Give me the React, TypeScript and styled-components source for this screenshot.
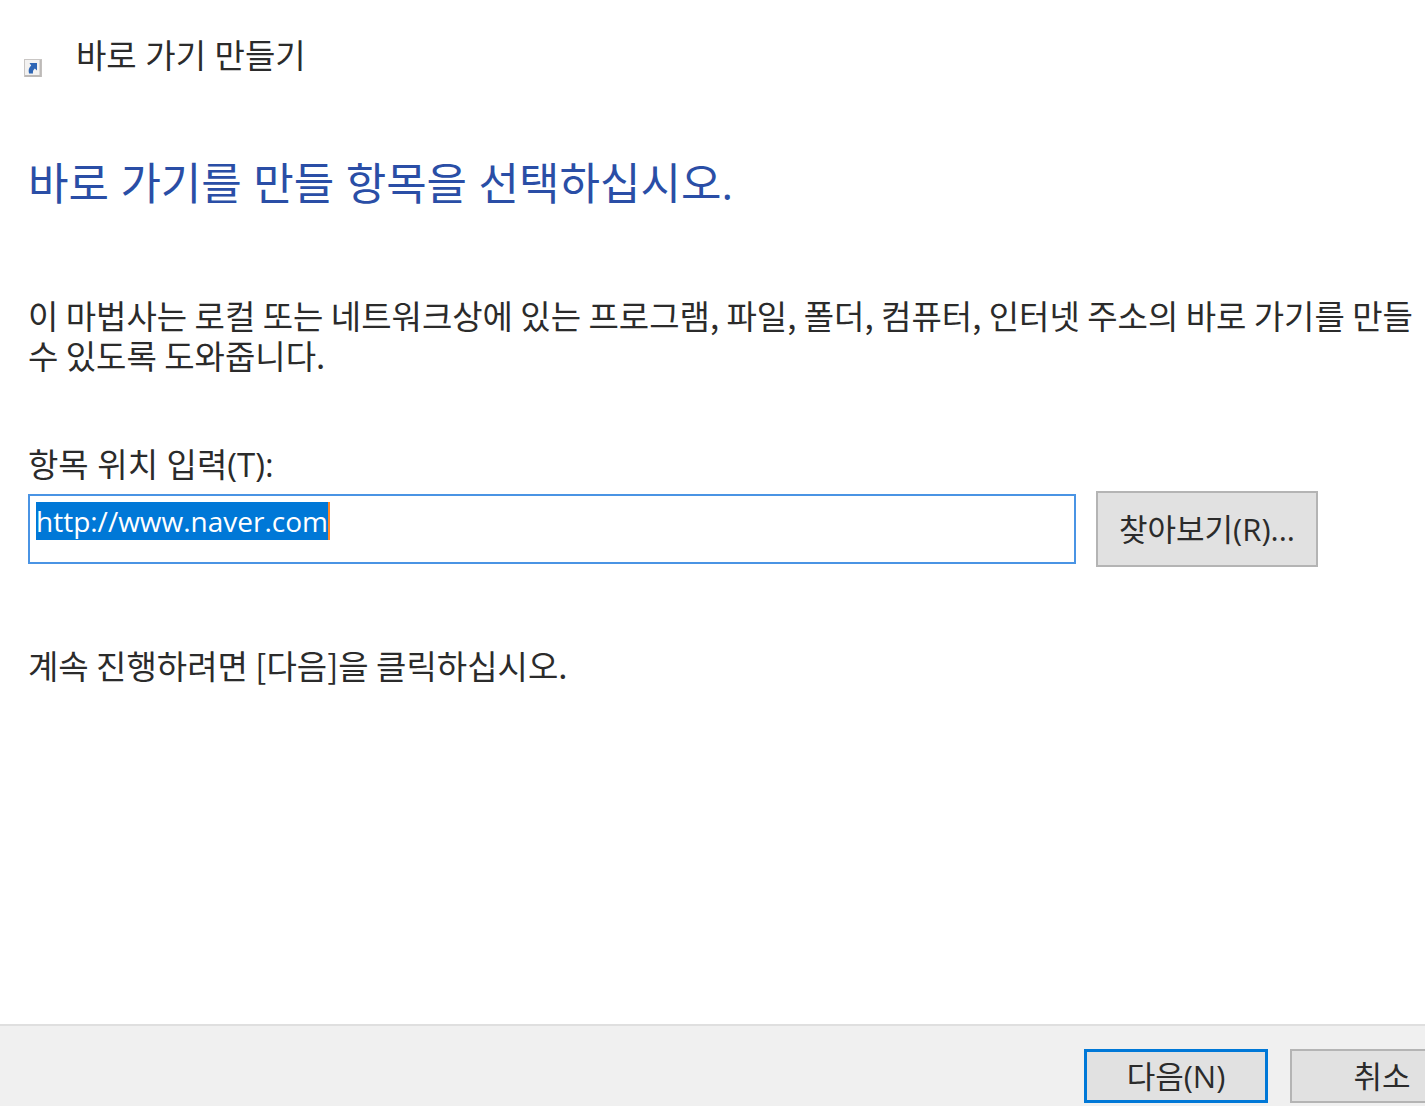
import React, { useEffect, useRef } from 'react';
import styled, { createGlobalStyle } from 'styled-components';

const Global = createGlobalStyle`
  * { box-sizing: border-box; }
  body { margin: 0; background: #fff; color: #2b2b2b; font: 33px/40px "Open Sans", "Noto Sans CJK KR", sans-serif; word-break: keep-all; }
  input, button { font: inherit; color: inherit; }
`;

const Dialog = styled.div`
  min-height: 100vh;
  display: flex;
  flex-direction: column;
  overflow: hidden;
`;

const TitleBar = styled.header`
  display: flex;
  align-items: center;
  gap: 34px;
  padding: 35px 24px 0;
`;

const ShortcutIcon = styled.svg`
  width: 18px;
  height: 18px;
  margin-top: 24px;
  flex: none;
`;

const Content = styled.main`
  flex: 1;
  padding: 78px 0 0 28px;
`;

const Heading = styled.h1`
  margin: 0 0 84px;
  font-size: 44px;
  line-height: 56px;
  font-weight: 400;
  color: #2a4ea6;
`;

const Text = styled.p`
  margin: 0;
  font-family: "Noto Sans CJK KR", sans-serif;
`;

const Field = styled.div`
  display: flex;
  flex-direction: column;
  margin: 70px 0 78px;
`;

const FieldRow = styled.div`
  display: flex;
  align-items: center;
  gap: 20px;
  padding-right: 107px;
  margin-top: 6px;
`;

const InputFrame = styled.div`
  position: relative;
  flex: 1;
  min-width: 0;
  display: flex;
`;

const LocationInput = styled.input`
  width: 100%;
  height: 70px;
  padding: 0 6px 16px;
  border: 2px solid #4a94e4;
  outline: 0;
  background: #fff;
  font-size: 28px;
  &::selection { background: #0078d7; color: #fff; }
`;

const Caret = styled.span`
  position: absolute;
  left: 300px;
  top: 8px;
  width: 2px;
  height: 38px;
  background: #ff8728;
`;

const Button = styled.button<{ $primary?: boolean; $tall?: boolean }>`
  flex: none;
  width: ${p => (p.$tall ? 222 : 184)}px;
  height: ${p => (p.$tall ? 76 : 54)}px;
  padding: 0;
  font-size: 31px;
  background: #e1e1e1;
  border: ${p => (p.$primary ? '3px solid #0078d7' : '2px solid #b4b4b4')};
`;

const Footer = styled.footer`
  display: flex;
  justify-content: flex-end;
  gap: 22px;
  padding: 23px 0 3px;
  margin-right: -49px;
  background: #f0f0f0;
  border-top: 2px solid #dfdfdf;
`;

export default function App() {
  const input = useRef<HTMLInputElement>(null);
  useEffect(() => {
    input.current?.focus();
    input.current?.select();
  }, []);
  return (
    <Dialog>
      <Global />
      <TitleBar>
        <ShortcutIcon viewBox="0 0 18 18" aria-hidden="true">
          <rect x="0.5" y="0.5" width="17" height="17" fill="#f3f2f1" stroke="#c9c6c4" />
          <path d="M16.5 1v16H1" fill="none" stroke="#bdbab8" strokeWidth="2" />
          <path d="M5.5 4H13v7.500l-2.200-2C9 11 8.800 12.500 9 14.500H5C4.200 11 4.800 8.800 7.200 6.600z" fill="#2f66b5" />
        </ShortcutIcon>
        <span>바로 가기 만들기</span>
      </TitleBar>
      <Content>
        <Heading>바로 가기를 만들 항목을 선택하십시오.</Heading>
        <Text>이 마법사는 로컬 또는 네트워크상에 있는 프로그램, 파일, 폴더, 컴퓨터, 인터넷 주소의 바로 가기를 만들 수 있도록 도와줍니다.</Text>
        <Field>
          <label htmlFor="location">항목 위치 입력(T):</label>
          <FieldRow>
            <InputFrame>
              <LocationInput id="location" ref={input} defaultValue="http://www.naver.com" spellCheck={false} />
              <Caret />
            </InputFrame>
            <Button type="button" $tall>찾아보기(R)...</Button>
          </FieldRow>
        </Field>
        <Text>계속 진행하려면 [다음]을 클릭하십시오.</Text>
      </Content>
      <Footer>
        <Button type="button" $primary>다음(N)</Button>
        <Button type="button">취소</Button>
      </Footer>
    </Dialog>
  );
}
